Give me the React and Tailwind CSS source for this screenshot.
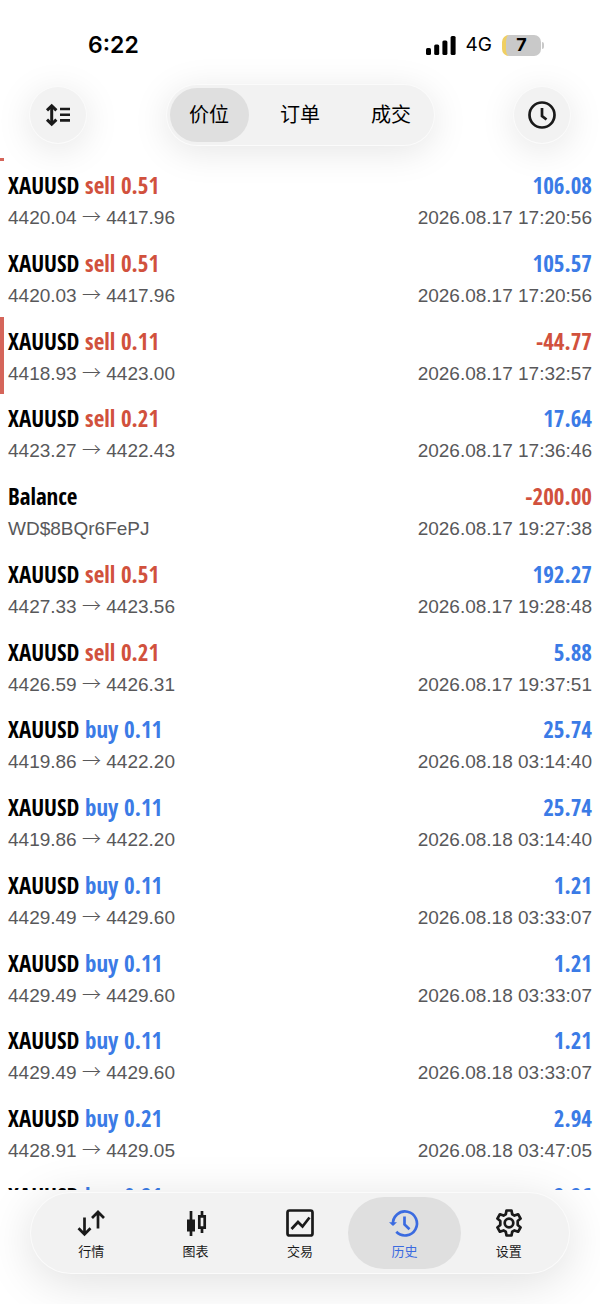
import React, { useState } from 'react';

const deals = [
  { symbol: 'XAUUSD', side: 'sell', volume: '0.51', open: '4420.04', close: '4417.96', profit: '106.08', time: '2026.08.17 17:20:56' },
  { symbol: 'XAUUSD', side: 'sell', volume: '0.51', open: '4420.03', close: '4417.96', profit: '105.57', time: '2026.08.17 17:20:56' },
  { symbol: 'XAUUSD', side: 'sell', volume: '0.11', open: '4418.93', close: '4423.00', profit: '-44.77', time: '2026.08.17 17:32:57', marked: true },
  { symbol: 'XAUUSD', side: 'sell', volume: '0.21', open: '4423.27', close: '4422.43', profit: '17.64', time: '2026.08.17 17:36:46' },
  { symbol: 'Balance', note: 'WD$8BQr6FePJ', profit: '-200.00', time: '2026.08.17 19:27:38' },
  { symbol: 'XAUUSD', side: 'sell', volume: '0.51', open: '4427.33', close: '4423.56', profit: '192.27', time: '2026.08.17 19:28:48' },
  { symbol: 'XAUUSD', side: 'sell', volume: '0.21', open: '4426.59', close: '4426.31', profit: '5.88', time: '2026.08.17 19:37:51' },
  { symbol: 'XAUUSD', side: 'buy', volume: '0.11', open: '4419.86', close: '4422.20', profit: '25.74', time: '2026.08.18 03:14:40' },
  { symbol: 'XAUUSD', side: 'buy', volume: '0.11', open: '4419.86', close: '4422.20', profit: '25.74', time: '2026.08.18 03:14:40' },
  { symbol: 'XAUUSD', side: 'buy', volume: '0.11', open: '4429.49', close: '4429.60', profit: '1.21', time: '2026.08.18 03:33:07' },
  { symbol: 'XAUUSD', side: 'buy', volume: '0.11', open: '4429.49', close: '4429.60', profit: '1.21', time: '2026.08.18 03:33:07' },
  { symbol: 'XAUUSD', side: 'buy', volume: '0.11', open: '4429.49', close: '4429.60', profit: '1.21', time: '2026.08.18 03:33:07' },
  { symbol: 'XAUUSD', side: 'buy', volume: '0.21', open: '4428.91', close: '4429.05', profit: '2.94', time: '2026.08.18 03:47:05' },
];

const nextDeal = { symbol: 'XAUUSD', side: 'buy', volume: '0.21', profit: '2.26' };

const iconProps = {
  viewBox: '0 0 28 28',
  fill: 'none',
  stroke: 'currentColor',
  strokeWidth: 2.7,
  className: 'size-7 overflow-visible',
  'aria-hidden': true,
};

const SortIcon = () => (
  <svg {...iconProps} strokeWidth="3">
    <path d="M7.700 5v18" />
    <path d="M3 9.300l4.700-4.500 4.700 4.500M3 18.700l4.700 4.500 4.700-4.500" />
    <path d="M16 8h10M16 13.700h10M16 19.400h10" strokeWidth="2.600" />
  </svg>
);

const ClockIcon = () => (
  <svg {...iconProps}>
    <circle cx="14" cy="14" r="12.500" />
    <path d="M14 7v8l4.500 3.500" />
  </svg>
);

const QuotesIcon = () => (
  <svg {...iconProps}>
    <path d="M7.500 8.500v16.500M1.500 19.300l6 6 6-6" />
    <path d="M21 19.500V3M15 9l6-6 6 6" />
  </svg>
);

const ChartIcon = () => (
  <svg {...iconProps}>
    <path d="M9 2v25" />
    <path d="M5 10.500h8v12H5z" fill="currentColor" stroke="none" />
    <path d="M20 2v4M20 20v4" />
    <path d="M17.300 7.300h5.400v11.400h-5.400z" />
  </svg>
);

const TradeIcon = () => (
  <svg {...iconProps}>
    <rect x="1.500" y="1.500" width="25" height="25" rx="2" />
    <path d="M5.500 20l6.500-7 4.500 4.500L23.500 8.500" />
  </svg>
);

const HistoryIcon = () => (
  <svg {...iconProps}>
    <path d="M3 15.500A12 12 0 1 1 6.300 22.800" />
    <path d="M-1 13.200h8L3 17z" fill="currentColor" stroke="none" />
    <path d="M14.500 7.500v8l5 4.700" />
  </svg>
);

const SettingsIcon = () => (
  <svg {...iconProps}>
    <circle cx="14" cy="14" r="4.300" />
    <path
      strokeLinejoin="round"
      d="M11.500 1.500h5l.7 3.800 2.300 1.300 3.600-1.300 2.500 4.300-2.900 2.500v3.800l2.900 2.500-2.500 4.300-3.600-1.300-2.300 1.300-.7 3.800h-5l-.7-3.800-2.300-1.300-3.600 1.300-2.500-4.300 2.900-2.500v-3.800L2.400 9.600l2.500-4.300 3.600 1.300 2.300-1.300z"
    />
  </svg>
);

const tabs = ['价位', '订单', '成交'];

const pages = [
  { label: '行情', icon: QuotesIcon },
  { label: '图表', icon: ChartIcon },
  { label: '交易', icon: TradeIcon },
  { label: '历史', icon: HistoryIcon },
  { label: '设置', icon: SettingsIcon },
];

function StatusBar() {
  return (
    <div className="flex h-6 items-center justify-between pr-14 pl-[88px] text-black">
      <span className="font-['Inter',sans-serif] text-[23px] leading-6 font-semibold">6:22</span>
      <div className="flex items-center gap-2.5">
        <svg viewBox="0 0 30 19" className="h-[19px] w-[30px]" fill="currentColor" aria-hidden="true">
          <rect x="0" y="12" width="5" height="7" rx="1.500" />
          <rect x="8.200" y="8.500" width="5" height="10.500" rx="1.500" />
          <rect x="16.400" y="4.500" width="5" height="14.500" rx="1.500" />
          <rect x="24.600" y="0" width="5" height="19" rx="1.500" />
        </svg>
        <span className="font-['Inter',sans-serif] text-[19px] leading-6">4G</span>
        <div className="flex items-center gap-px">
          <div className="flex h-[21px] w-[39px] items-center justify-center overflow-hidden rounded-[7px] border-l-4 border-[#f0cf62] bg-[#c9c9c9] pr-1 font-['Inter',sans-serif] text-lg font-bold">
            7
          </div>
          <div className="h-[7px] w-0.5 rounded-r-full bg-[#c9c9c9]" />
        </div>
      </div>
    </div>
  );
}

function RoundButton({ label, children }) {
  return (
    <button
      type="button"
      aria-label={label}
      className="flex size-[58px] items-center justify-center rounded-full border border-white/70 bg-[#f2f2f2] text-[#1a1a1a] shadow-[0_6px_36px_rgba(0,0,0,0.10)]"
    >
      {children}
    </button>
  );
}

function DealTitle({ deal }) {
  const sideColor = deal.side === 'buy' ? 'text-[#3b7be6]' : 'text-[#d1513d]';
  const profitColor = deal.profit.startsWith('-') ? 'text-[#d1513d]' : 'text-[#3b7be6]';
  return (
    <div className="flex justify-between font-['Open_Sans_Condensed','Roboto_Condensed',sans-serif] text-[23px] leading-8 font-semibold">
      <span className="text-black">
        {deal.symbol}
        {deal.side && <span className={sideColor}> {deal.side} {deal.volume}</span>}
      </span>
      <span className={profitColor}>{deal.profit}</span>
    </div>
  );
}

function DealRow({ deal }) {
  return (
    <li className={`grow border-l-4 pt-2 pr-2 pb-0.5 pl-1 ${deal.marked ? 'border-[#d5655a]' : 'border-transparent'}`}>
      <DealTitle deal={deal} />
      <div className="flex justify-between text-[19px] leading-[34px] text-[#58585a]">
        {deal.note ? (
          <span>{deal.note}</span>
        ) : (
          <span>
            {deal.open} <span className="font-['Noto_Sans_CJK_SC',sans-serif] leading-none font-light">→</span> {deal.close}
          </span>
        )}
        <time>{deal.time}</time>
      </div>
    </li>
  );
}

export default function App() {
  const [tab, setTab] = useState('价位');
  const [page, setPage] = useState('历史');

  return (
    <div className="flex h-dvh flex-col overflow-hidden bg-white font-['Liberation_Sans','Noto_Sans_CJK_SC',sans-serif]">
      <header className="relative z-10 pt-[33px] pb-3">
        <StatusBar />
        <div className="mt-[27px] flex items-center justify-between px-[29px]">
          <RoundButton label="排序"><SortIcon /></RoundButton>
          <div className="flex gap-3 rounded-full border border-white/70 bg-[#f2f2f2] p-[3px] shadow-[0_6px_36px_rgba(0,0,0,0.10)]">
            {tabs.map((name) => (
              <button
                key={name}
                type="button"
                onClick={() => setTab(name)}
                className={`h-[54px] w-[79px] rounded-full text-xl text-black ${tab === name ? 'bg-[#dfdfdf]' : ''}`}
              >
                {name}
              </button>
            ))}
          </div>
          <RoundButton label="时间"><ClockIcon /></RoundButton>
        </div>
      </header>

      <main className="flex min-h-0 flex-1 flex-col overflow-y-auto [scrollbar-width:none]">
        <div className="h-[3px] w-1 shrink-0 bg-[#d5655a]" />
        <ul className="flex grow flex-col">
          {deals.map((deal, idx) => (
            <DealRow key={idx} deal={deal} />
          ))}
          {/* only the top edge of the next deal peeks out above the tab bar */}
          <li className="h-[18px] shrink-0 overflow-hidden pt-2 pr-2 pl-2">
            <DealTitle deal={nextDeal} />
          </li>
        </ul>
      </main>

      <footer className="relative z-10 px-[30px] pt-0.5 pb-[30px]">
        <nav className="flex rounded-full border border-white/70 bg-[#f2f2f2] px-2 py-1 shadow-[0_8px_48px_rgba(0,0,0,0.13)]">
          {pages.map(({ label, icon: Icon }) => (
            <button
              key={label}
              type="button"
              onClick={() => setPage(label)}
              className="flex-1"
            >
              <span
                className={`-mx-1 flex h-18 flex-col items-center gap-[5px] rounded-full pt-3 ${page === label ? 'bg-[#dfdfdf] text-[#3b6be0]' : 'text-[#1a1a1a]'}`}
              >
                <Icon />
                <span className="text-[13px] leading-5">{label}</span>
              </span>
            </button>
          ))}
        </nav>
      </footer>
    </div>
  );
}
